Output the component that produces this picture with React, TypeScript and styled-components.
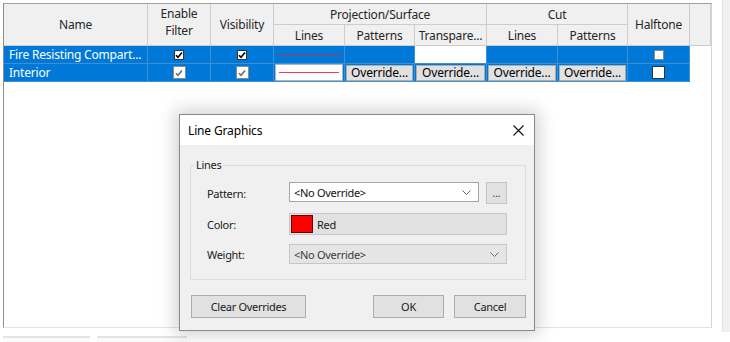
import React from 'react';
import styled, { createGlobalStyle } from 'styled-components';

const Global = createGlobalStyle`
  html, body { margin: 0; padding: 0; background: #fff; }
  body { font-family: "Noto Sans", "Segoe UI", sans-serif; overflow: hidden; }
  #root { width: 730px; height: 342px; position: relative; overflow: hidden; }
`;

const Page = styled.div`
  position: relative;
  width: 730px;
  height: 342px;
  box-sizing: border-box;
  padding: 3px 0 0 3px;
  display: flex;
  flex-direction: column;
`;

const TopRow = styled.div`
  display: flex;
  gap: 10px;
`;

const Panel = styled.div`
  width: 709px;
  height: 325px;
  box-sizing: border-box;
  border-top: 1px solid #a0a0a0;
  border-left: 1px solid #8f8f8f;
  border-right: 1px solid #d6d6d6;
  border-bottom: 1px solid #e2e2e2;
  background: #fff;
`;

const Stripe = styled.div`
  width: 8px;
  height: 332px;
  margin-top: -3px;
  background: #f0f0f0;
  border-left: 1px solid #e2e2e2;
  box-sizing: border-box;
`;

const Grid = styled.div`
  display: grid;
  grid-template-columns: 144px 63px 63px 71px 70px 72px 71px 70px 62px 21px;
  grid-template-rows: 21px 21px 18px 18px;
  font-size: 12px;
  letter-spacing: -0.2px;
`;

const HeaderCell = styled.div<{ $c: string; $r: string; $stack?: boolean }>`
  grid-column: ${(p) => p.$c};
  grid-row: ${(p) => p.$r};
  background: #f0f0f0;
  border-right: 1px solid #cdcdcd;
  border-bottom: 1px solid #cdcdcd;
  box-sizing: border-box;
  display: flex;
  flex-direction: column;
  align-items: center;
  justify-content: ${(p) => (p.$stack ? 'flex-start' : 'center')};
  padding-top: ${(p) => (p.$stack ? '1px' : '0')};
  text-align: center;
  line-height: 15px;
  color: #262626;
  white-space: nowrap;
`;

const HeaderLine = styled.span`
  display: block;
  height: 17px;
  line-height: 17px;
`;

const BodyCell = styled.div<{ $tone: 'blue' | 'white' | 'none'; $left?: boolean }>`
  background: ${(p) => (p.$tone === 'blue' ? '#0078d7' : '#fff')};
  border-right: 1px solid ${(p) => (p.$tone === 'none' ? '#fff' : '#3f8fd6')};
  border-bottom: 1px solid ${(p) => (p.$tone === 'none' ? '#fff' : '#3f8fd6')};
  box-sizing: border-box;
  display: flex;
  align-items: center;
  justify-content: ${(p) => (p.$left ? 'flex-start' : 'center')};
  padding-left: ${(p) => (p.$left ? '5px' : '0')};
  color: #fff;
  white-space: nowrap;
  overflow: hidden;
`;

const Box = styled.span<{ $big?: boolean; $dark?: boolean }>`
  width: ${(p) => (p.$big ? 13 : 10)}px;
  height: ${(p) => (p.$big ? 13 : 10)}px;
  box-sizing: border-box;
  background: #fff;
  border: 1px solid ${(p) => (p.$dark ? '#333' : '#8a8a8a')};
  display: flex;
  align-items: center;
  justify-content: center;
`;

const LineOnBlue = styled.span`
  width: 65px;
  height: 1px;
  background: #b8324f;
`;

const LineButton = styled.span`
  flex: 1;
  margin: 1px;
  height: 15px;
  background: #fdfdfd;
  border: 1px solid #b4b4b4;
  display: flex;
  align-items: center;
  padding: 0 3px;
`;

const RedLine = styled.span`
  flex: 1;
  height: 1px;
  background: #e8474b;
`;

const OverrideButton = styled.button`
  flex: 1;
  margin: 1px;
  height: 16px;
  padding: 0;
  background: #e1e1e1;
  border: 1px solid #adadad;
  font: inherit;
  letter-spacing: inherit;
  color: #000;
  line-height: 13px;
`;

const Footer = styled.div`
  display: flex;
  gap: 7px;
  margin-top: 4px;
`;

const GhostButton = styled.div<{ $w: number }>`
  width: ${(p) => p.$w}px;
  height: 20px;
  border-top: 2px solid #e4e4e4;
  background: #fbfbfb;
`;

/* Dialog */
const Dialog = styled.div`
  position: absolute;
  left: 179px;
  top: 114px;
  width: 356px;
  height: 217px;
  box-sizing: border-box;
  border: 1px solid #8a8a8a;
  background: #f0f0f0;
  box-shadow: 0 0 16px 4px rgba(0, 0, 0, 0.18);
  display: flex;
  flex-direction: column;
  color: #1a1a1a;
`;

const TitleBar = styled.div`
  height: 30px;
  flex: none;
  background: #fff;
  display: flex;
  align-items: center;
  justify-content: space-between;
  padding: 0 10px 0 8px;
  font-size: 12px;
  letter-spacing: -0.15px;
  color: #000;
`;

const DialogBody = styled.div`
  padding: 0 8px 0 10px;
  display: flex;
  flex-direction: column;
  font-size: 11px;
  letter-spacing: -0.3px;
`;

const Group = styled.fieldset`
  margin: 13px 0 0 0;
  padding: 10px 17px 15px 3px;
  border: 1px solid #dcdcdc;
  min-width: 0;
`;

const Legend = styled.legend`
  padding: 0 2px;
  font-size: 11px;
  line-height: 14px;
  color: #1a1a1a;
`;

const Form = styled.div`
  margin-left: 13px;
  display: grid;
  grid-template-columns: 82px 190px 7px 21px;
  grid-template-rows: 22px 22px 20px;
  row-gap: 9px;
`;

const Label = styled.span`
  align-self: center;
`;

const Select = styled.div<{ $disabled?: boolean; $span?: boolean }>`
  grid-column: ${(p) => (p.$span ? '2 / 5' : 'auto')};
  height: 20px;
  box-sizing: border-box;
  background: ${(p) => (p.$disabled ? '#e5e5e5' : '#fff')};
  border: 1px solid ${(p) => (p.$disabled ? '#c6c6c6' : '#a6a6a6')};
  color: ${(p) => (p.$disabled ? '#3a3a3a' : '#111')};
  display: flex;
  align-items: center;
  justify-content: space-between;
  padding: 0 7px 0 4px;
`;

const DotsButton = styled.button`
  grid-column: 4;
  height: 22px;
  padding: 0;
  background: #e1e1e1;
  border: 1px solid #c4c4c4;
  font: inherit;
  font-size: 10px;
  color: #333;
  line-height: 10px;
`;

const ColorField = styled.div`
  grid-column: 2 / 5;
  height: 22px;
  box-sizing: border-box;
  background: #e1e1e1;
  border: 1px solid #c6c6c6;
  display: flex;
  align-items: center;
  gap: 4px;
  padding: 1px;
`;

const Swatch = styled.span<{ $color: string }>`
  width: 22px;
  height: 18px;
  box-sizing: border-box;
  background: ${(p) => p.$color};
  border: 1px solid #6b0000;
`;

const ButtonRow = styled.div`
  display: flex;
  margin-top: 15px;
  padding-left: 1px;
  gap: 10px;
`;

const DlgButton = styled.button<{ $w: number; $push?: boolean }>`
  width: ${(p) => p.$w}px;
  height: 23px;
  margin-left: ${(p) => (p.$push ? 'auto' : '0')};
  background: #e1e1e1;
  border: 1px solid #adadad;
  font: inherit;
  font-size: 11px;
  letter-spacing: -0.3px;
  color: #1a1a1a;
  padding: 0;
`;

const Check = ({ color }: { color: string }) => (
  <svg width="8" height="8" viewBox="0 0 8 8">
    <polyline points="1,4.2 3,6.3 7,1.5" fill="none" stroke={color} strokeWidth="1.6" />
  </svg>
);

const Chevron = () => (
  <svg width="9" height="5" viewBox="0 0 9 5">
    <polyline points="0.5,0.5 4.5,4.5 8.5,0.5" fill="none" stroke="#6a6a6a" strokeWidth="1" />
  </svg>
);

const CloseIcon = () => (
  <svg width="11" height="11" viewBox="0 0 11 11">
    <path d="M0.5 0.5 L10.5 10.5 M10.5 0.5 L0.5 10.5" stroke="#111" strokeWidth="1.1" />
  </svg>
);

export default function App() {
  return (
    <>
      <Global />
      <Page>
        <TopRow>
          <Panel>
            <Grid>
              <HeaderCell $c="1" $r="1 / 3">Name</HeaderCell>
              <HeaderCell $c="2" $r="1 / 3" $stack>
                <HeaderLine>Enable</HeaderLine>
                <HeaderLine>Filter</HeaderLine>
              </HeaderCell>
              <HeaderCell $c="3" $r="1 / 3">Visibility</HeaderCell>
              <HeaderCell $c="4 / 7" $r="1">Projection/Surface</HeaderCell>
              <HeaderCell $c="7 / 9" $r="1">Cut</HeaderCell>
              <HeaderCell $c="9" $r="1 / 3">Halftone</HeaderCell>
              <HeaderCell $c="10" $r="1 / 3" />
              <HeaderCell $c="4" $r="2">Lines</HeaderCell>
              <HeaderCell $c="5" $r="2">Patterns</HeaderCell>
              <HeaderCell $c="6" $r="2">Transpare...</HeaderCell>
              <HeaderCell $c="7" $r="2">Lines</HeaderCell>
              <HeaderCell $c="8" $r="2">Patterns</HeaderCell>

              <BodyCell $tone="blue" $left>Fire Resisting Compart...</BodyCell>
              <BodyCell $tone="blue">
                <Box $dark>
                  <Check color="#000" />
                </Box>
              </BodyCell>
              <BodyCell $tone="blue">
                <Box $dark>
                  <Check color="#000" />
                </Box>
              </BodyCell>
              <BodyCell $tone="blue">
                <LineOnBlue />
              </BodyCell>
              <BodyCell $tone="blue" />
              <BodyCell $tone="white" />
              <BodyCell $tone="blue" />
              <BodyCell $tone="blue" />
              <BodyCell $tone="blue">
                <Box />
              </BodyCell>
              <BodyCell $tone="none" />

              <BodyCell $tone="blue" $left>Interior</BodyCell>
              <BodyCell $tone="blue">
                <Box $big>
                  <Check color="#6e6e6e" />
                </Box>
              </BodyCell>
              <BodyCell $tone="blue">
                <Box $big>
                  <Check color="#6e6e6e" />
                </Box>
              </BodyCell>
              <BodyCell $tone="blue">
                <LineButton>
                  <RedLine />
                </LineButton>
              </BodyCell>
              <BodyCell $tone="blue">
                <OverrideButton>Override...</OverrideButton>
              </BodyCell>
              <BodyCell $tone="blue">
                <OverrideButton>Override...</OverrideButton>
              </BodyCell>
              <BodyCell $tone="blue">
                <OverrideButton>Override...</OverrideButton>
              </BodyCell>
              <BodyCell $tone="blue">
                <OverrideButton>Override...</OverrideButton>
              </BodyCell>
              <BodyCell $tone="blue">
                <Box $big $dark />
              </BodyCell>
              <BodyCell $tone="none" />
            </Grid>
          </Panel>
          <Stripe />
        </TopRow>
        <Footer>
          <GhostButton $w={87} />
          <GhostButton $w={90} />
        </Footer>

        <Dialog>
          <TitleBar>
            <span>Line Graphics</span>
            <CloseIcon />
          </TitleBar>
          <DialogBody>
            <Group>
              <Legend>Lines</Legend>
              <Form>
                <Label>Pattern:</Label>
                <Select>
                  <span>&lt;No Override&gt;</span>
                  <Chevron />
                </Select>
                <DotsButton>...</DotsButton>

                <Label>Color:</Label>
                <ColorField>
                  <Swatch $color="#ff0000" />
                  <span>Red</span>
                </ColorField>

                <Label>Weight:</Label>
                <Select $disabled $span>
                  <span>&lt;No Override&gt;</span>
                  <Chevron />
                </Select>
              </Form>
            </Group>
            <ButtonRow>
              <DlgButton $w={115}>Clear Overrides</DlgButton>
              <DlgButton $w={71} $push>
                OK
              </DlgButton>
              <DlgButton $w={72}>Cancel</DlgButton>
            </ButtonRow>
          </DialogBody>
        </Dialog>
      </Page>
    </>
  );
}
